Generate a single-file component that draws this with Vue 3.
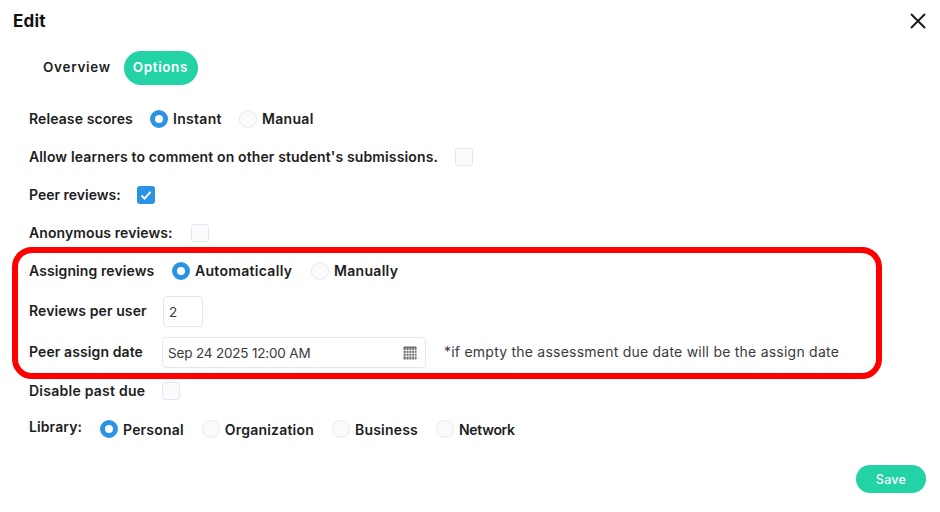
<script setup>
const libs = [
  { label: 'Personal', on: true },
  { label: 'Organization', on: false },
  { label: 'Business', on: false },
  { label: 'Network', on: false },
]
</script>

<template>
  <div class="dialog">
    <header class="head">
      <h1 class="title">Edit</h1>
      <svg class="close" viewBox="0 0 16 16" width="16" height="16" aria-label="Close">
        <path d="M1 1 15 15M15 1 1 15" stroke="#1c1c22" stroke-width="2" fill="none" />
      </svg>
    </header>

    <nav class="tabs">
      <span class="tab">Overview</span>
      <span class="tab active">Options</span>
    </nav>

    <section class="form">
      <div class="row">
        <span class="label w-release">Release scores</span>
        <span class="radio on"></span><span class="opt mr-instant">Instant</span>
        <span class="radio"></span><span class="opt">Manual</span>
      </div>
      <div class="row">
        <span class="label w-allow">Allow learners to comment on other student's submissions.</span>
        <span class="check"></span>
      </div>
      <div class="row">
        <span class="label w-peer">Peer reviews:</span>
        <span class="check on">
          <svg viewBox="0 0 18 18" width="18" height="18"><path d="M4.5 9.5 7.6 12.6 13.5 5.8" stroke="#fff" stroke-width="2" fill="none" /></svg>
        </span>
      </div>
      <div class="row">
        <span class="label w-anon">Anonymous reviews:</span>
        <span class="check"></span>
      </div>

      <div class="highlight">
        <div class="row-plain first">
          <span class="label w-assign">Assigning reviews</span>
          <span class="radio on"></span><span class="opt mr-auto">Automatically</span>
          <span class="radio"></span><span class="opt">Manually</span>
        </div>
        <div class="row-plain second">
          <span class="label w-field">Reviews per user</span>
          <span class="input small">2</span>
        </div>
        <div class="row-plain third">
          <span class="label w-field">Peer assign date</span>
          <span class="input date">
            <span>Sep 24 2025 12:00 AM</span>
            <svg viewBox="0 0 14 14" width="14" height="14">
              <rect x="0.5" y="0.5" width="13" height="13" rx="1" fill="#6b6b70" />
              <path d="M0 4.5H14M0 7.3H14M0 10.1H14M3.2 2V14M6 2V14M8.8 2V14M11.6 2V14" stroke="#fff" stroke-width="0.8" />
            </svg>
          </span>
          <span class="hint">*if empty the assessment due date will be the assign date</span>
        </div>
      </div>

      <div class="row-past">
        <span class="label w-field past">Disable past due</span>
        <span class="check"></span>
      </div>

      <div class="row-lib">
        <span class="label lib-label">Library:</span>
        <template v-for="l in libs" :key="l.label">
          <span class="radio" :class="{ on: l.on }"></span><span class="opt lib-opt">{{ l.label }}</span>
        </template>
      </div>
    </section>

    <footer class="foot">
      <button class="save">Save</button>
    </footer>
  </div>
</template>

<style>
html, body { margin: 0; background: #fff; }
</style>

<style scoped>
.dialog {
  width: 940px;
  height: 512px;
  box-sizing: border-box;
  padding: 0 14px 0 13px;
  font-family: Inter, "Open Sans", sans-serif;
  color: #1d1d22;
  overflow: hidden;
}
.head {
  display: flex;
  justify-content: space-between;
  align-items: center;
  height: 42px;
}
.title { margin: 0; font-size: 17px; font-weight: 700; color: #111; letter-spacing: 0.2px; }
.tabs { display: flex; height: 34px; margin: 9px 0 0 20px; align-items: center; gap: 3px; }
.tab {
  font-size: 13.5px;
  font-weight: 600;
  padding: 0 10px;
  height: 34px;
  line-height: 33px;
  letter-spacing: 0.7px;
  border-radius: 17px;
}
.tab.active { background: #23d3a5; color: #fff; padding: 0 10px 0 9px; letter-spacing: 0.6px; }
.form { padding-left: 16px; margin-top: 15px; }
.row { display: flex; align-items: center; height: 38px; }
.row-plain { display: flex; align-items: center; }
.label { font-size: 14px; font-weight: 600; letter-spacing: 0.1px; white-space: nowrap; padding-bottom: 2px; }
.opt { font-size: 14px; font-weight: 600; letter-spacing: 0.3px; margin-left: 5px; white-space: nowrap; padding-bottom: 2px; }
.w-release { width: 121px; }
.mr-instant { width: 66px; }
.w-allow { width: 426px; letter-spacing: 0.13px; }
.w-peer { width: 108px; letter-spacing: 0; }
.w-anon { width: 162px; }
.w-assign { width: 143px; }
.mr-auto { width: 116px; }
.w-field { width: 133px; }
.past { letter-spacing: 0.25px; }
.radio {
  width: 18px;
  height: 18px;
  box-sizing: border-box;
  border-radius: 50%;
  border: 1px solid #e6e6ef;
  background: #fbfbfe;
  flex: none;
}
.radio.on { border: 5px solid #2b93e3; background: #fff; }
.check {
  width: 18px;
  height: 18px;
  box-sizing: border-box;
  border-radius: 3px;
  border: 1px solid #e6e6ef;
  background: #fbfbfe;
  flex: none;
  display: block;
}
.check.on { background: #2b93e3; border: 0; }
.check svg { display: block; }
.highlight {
  box-sizing: border-box;
  width: 870px;
  height: 132px;
  margin: -5px 0 0 -17px;
  padding: 8px 0 0 11px;
  border: 6px solid #ff0000;
  border-radius: 20px;
}
.first { height: 20px; }
.second { margin-top: 15px; }
.third { margin-top: 10px; }
.input {
  box-sizing: border-box;
  border: 1px solid #e6e6ef;
  border-radius: 4px;
  background: #fff;
  font-size: 13.5px;
  color: #3a3a40;
  display: flex;
  align-items: center;
  letter-spacing: -0.18px;
  padding: 0 5px;
}
.small { width: 40px; height: 31px; margin-left: 1px; }
.date { width: 264px; height: 31px; justify-content: space-between; padding-right: 8px; }
.hint { font-size: 14px; color: #3a3a40; margin-left: 18px; letter-spacing: 0.23px; white-space: nowrap; padding-bottom: 2px; }
.row-past { display: flex; align-items: center; margin-top: 2px; height: 20px; }
.row-lib { display: flex; align-items: center; margin-top: 18px; height: 20px; }
.lib-label { width: 71px; margin-top: -3px; }
.lib-opt { margin-right: 18px; padding-bottom: 0; letter-spacing: 0.2px; }
.lib-opt:last-child { letter-spacing: -0.3px; }
.foot { display: flex; justify-content: flex-end; margin-top: 26px; }
.save {
  width: 70px;
  height: 28px;
  border: 0;
  border-radius: 14px;
  background: #23d3a5;
  color: #fff;
  font: 500 12.5px Inter, sans-serif;
  letter-spacing: 0.3px;
  padding: 0;
}
</style>
